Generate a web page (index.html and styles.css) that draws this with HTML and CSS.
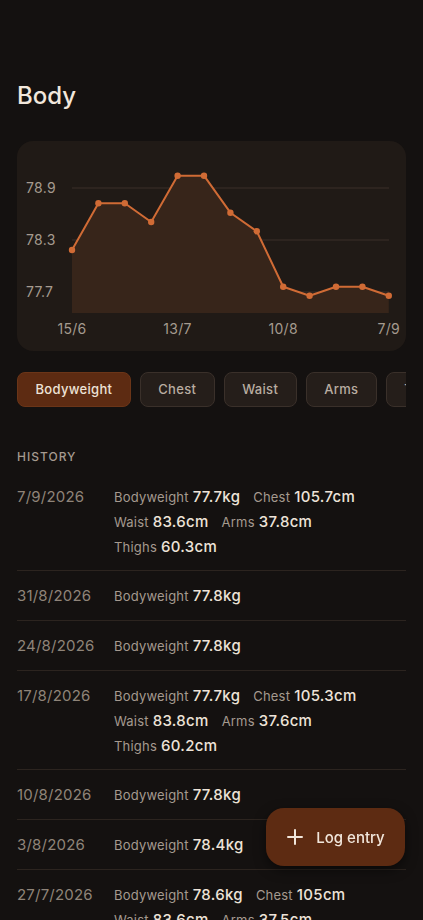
FILE: index.html
```html
<!DOCTYPE html>
<html lang="en">
<head>
    <meta charset="UTF-8">
    <title>Body</title>
    <link rel="stylesheet" href="styles.css">
</head>
<body>
    <div class="page">
        <h1 class="title">Body</h1>

        <div class="chartCard">
            <svg class="chart" width="388" height="210" viewBox="0 0 388 210">
                <line class="grid" x1="55" y1="47" x2="372" y2="47"></line>
                <line class="grid" x1="55" y1="99" x2="372" y2="99"></line>
                <line class="grid" x1="55" y1="151" x2="372" y2="151"></line>
                <text class="axis" x="9" y="52">78.9</text>
                <text class="axis" x="9" y="104">78.3</text>
                <text class="axis" x="9" y="156">77.7</text>
                <path class="area" d="M55 109 L81.4 62.3 L107.8 62.3 L134.2 81 L160.6 34.7 L187 34.7 L213.4 71.7 L239.8 90.3 L266.2 145.7 L292.6 154.7 L319 145.7 L345.4 145.7 L371.8 154.7 L371.8 172 L55 172 Z"></path>
                <polyline class="line" points="55,109 81.4,62.3 107.8,62.3 134.2,81 160.6,34.7 187,34.7 213.4,71.7 239.8,90.3 266.2,145.7 292.6,154.7 319,145.7 345.4,145.7 371.8,154.7"></polyline>
                <g class="dots">
                    <circle cx="55" cy="109" r="3.2"></circle>
                    <circle cx="81.4" cy="62.3" r="3.2"></circle>
                    <circle cx="107.8" cy="62.3" r="3.2"></circle>
                    <circle cx="134.2" cy="81" r="3.2"></circle>
                    <circle cx="160.6" cy="34.7" r="3.2"></circle>
                    <circle cx="187" cy="34.7" r="3.2"></circle>
                    <circle cx="213.4" cy="71.7" r="3.2"></circle>
                    <circle cx="239.8" cy="90.3" r="3.2"></circle>
                    <circle cx="266.2" cy="145.7" r="3.2"></circle>
                    <circle cx="292.6" cy="154.7" r="3.2"></circle>
                    <circle cx="319" cy="145.7" r="3.2"></circle>
                    <circle cx="345.4" cy="145.7" r="3.2"></circle>
                    <circle cx="371.8" cy="154.7" r="3.2"></circle>
                </g>
                <text class="axis mid" x="55" y="193">15/6</text>
                <text class="axis mid" x="160.6" y="193">13/7</text>
                <text class="axis mid" x="266.2" y="193">10/8</text>
                <text class="axis end" x="383" y="193">7/9</text>
            </svg>
        </div>

        <div class="chips">
            <div class="chip active">Bodyweight</div>
            <div class="chip">Chest</div>
            <div class="chip">Waist</div>
            <div class="chip">Arms</div>
            <div class="chip">Thighs</div>
        </div>

        <div class="sectionLabel">HISTORY</div>

        <ul class="history">
            <li class="row">
                <span class="date">7/9/2026</span>
                <div class="vals">
                    <span class="val"><em>Bodyweight</em>77.7kg</span>
                    <span class="val"><em>Chest</em>105.7cm</span>
                    <span class="val"><em>Waist</em>83.6cm</span>
                    <span class="val"><em>Arms</em>37.8cm</span>
                    <span class="val"><em>Thighs</em>60.3cm</span>
                </div>
            </li>
            <li class="row">
                <span class="date">31/8/2026</span>
                <div class="vals">
                    <span class="val"><em>Bodyweight</em>77.8kg</span>
                </div>
            </li>
            <li class="row">
                <span class="date">24/8/2026</span>
                <div class="vals">
                    <span class="val"><em>Bodyweight</em>77.8kg</span>
                </div>
            </li>
            <li class="row">
                <span class="date">17/8/2026</span>
                <div class="vals">
                    <span class="val"><em>Bodyweight</em>77.7kg</span>
                    <span class="val"><em>Chest</em>105.3cm</span>
                    <span class="val"><em>Waist</em>83.8cm</span>
                    <span class="val"><em>Arms</em>37.6cm</span>
                    <span class="val"><em>Thighs</em>60.2cm</span>
                </div>
            </li>
            <li class="row">
                <span class="date">10/8/2026</span>
                <div class="vals">
                    <span class="val"><em>Bodyweight</em>77.8kg</span>
                </div>
            </li>
            <li class="row">
                <span class="date">3/8/2026</span>
                <div class="vals">
                    <span class="val"><em>Bodyweight</em>78.4kg</span>
                </div>
            </li>
            <li class="row">
                <span class="date">27/7/2026</span>
                <div class="vals">
                    <span class="val"><em>Bodyweight</em>78.6kg</span>
                    <span class="val"><em>Chest</em>105cm</span>
                    <span class="val"><em>Waist</em>83.6cm</span>
                    <span class="val"><em>Arms</em>37.5cm</span>
                    <span class="val"><em>Thighs</em>60.1cm</span>
                </div>
            </li>
        </ul>
    </div>

    <div class="fab">
        <svg width="18" height="18" viewBox="0 0 18 18">
            <path d="M9 2 V16 M2 9 H16" stroke="#f1e6db" stroke-width="2" stroke-linecap="round"></path>
        </svg>
        <span>Log entry</span>
    </div>
</body>
</html>
```

FILE: styles.css
```css
* {
    padding: 0px;
    margin: 0px;
    list-style: none;
    box-sizing: border-box;
}
html, body {
    height: 100%;
    overflow: hidden;
}
body {
    background: #141110;
    color: #ede3d8;
    font-family: Inter, "Noto Sans", sans-serif;
}
.page {
    padding: 81px 17px 0 17px;
}
.title {
    font-size: 24px;
    line-height: 30px;
    font-weight: 500;
    color: #f1e7dc;
}
.chartCard {
    margin-top: 30px;
    height: 210px;
    border-radius: 16px;
    background: #201a16;
    overflow: hidden;
}
.chart {
    display: block;
}
.chart .grid {
    stroke: #3a2f28;
    stroke-width: 1;
}
.chart .axis {
    fill: #a59a8f;
    font-size: 14px;
    letter-spacing: 0.3px;
    font-family: Inter, "Noto Sans", sans-serif;
}
.chart .axis.mid {
    text-anchor: middle;
}
.chart .axis.end {
    text-anchor: end;
}
.chart .area {
    fill: #37251a;
}
.chart .line {
    fill: none;
    stroke: #d06b35;
    stroke-width: 2;
    stroke-linejoin: round;
}
.chart .dots circle {
    fill: #d06b35;
}
.chips {
    margin-top: 21px;
    display: flex;
    gap: 9px;
    overflow: hidden;
}
.chip {
    flex: none;
    height: 35px;
    line-height: 33px;
    padding: 0 17.5px;
    border-radius: 8px;
    border: 1px solid #3a302a;
    background: #251e1a;
    color: #b9ada1;
    font-size: 13px;
    font-weight: 500;
    letter-spacing: 0.3px;
}
.chip.active {
    background: #5d2b12;
    border-color: #6b3518;
    color: #eee2d6;
}
.sectionLabel {
    margin-top: 42px;
    font-size: 12px;
    line-height: 16px;
    letter-spacing: 1px;
    font-weight: 500;
    color: #a59a8f;
}
.history {
    margin-top: 7px;
}
.row {
    display: flex;
    padding: 12px 0;
    border-bottom: 1px solid #2c241f;
}
.row .date {
    flex: none;
    width: 97px;
    height: 25px;
    line-height: 25px;
    font-size: 15px;
    letter-spacing: 0.2px;
    color: #8f8479;
}
.row .vals {
    flex: 1;
    display: flex;
    flex-wrap: wrap;
    column-gap: 13px;
}
.row .val {
    display: flex;
    align-items: baseline;
    height: 25px;
    line-height: 25px;
    font-size: 15px;
    font-weight: 500;
    letter-spacing: 0.3px;
    color: #ede3d8;
}
.row .vals .val:nth-child(n+2) {
    height: 24.5px;
}
.row .val em {
    font-style: normal;
    font-weight: 400;
    font-size: 13px;
    letter-spacing: 0.2px;
    color: #a59a8f;
    margin-right: 4px;
}
.fab {
    position: fixed;
    right: 18px;
    bottom: 54px;
    width: 139px;
    height: 58px;
    border-radius: 18px;
    background: #5d2b12;
    display: flex;
    align-items: center;
    justify-content: center;
    gap: 12px;
    color: #f1e6db;
    font-size: 15px;
    font-weight: 500;
    box-shadow: 0 4px 12px rgba(0, 0, 0, 0.5);
}
```
